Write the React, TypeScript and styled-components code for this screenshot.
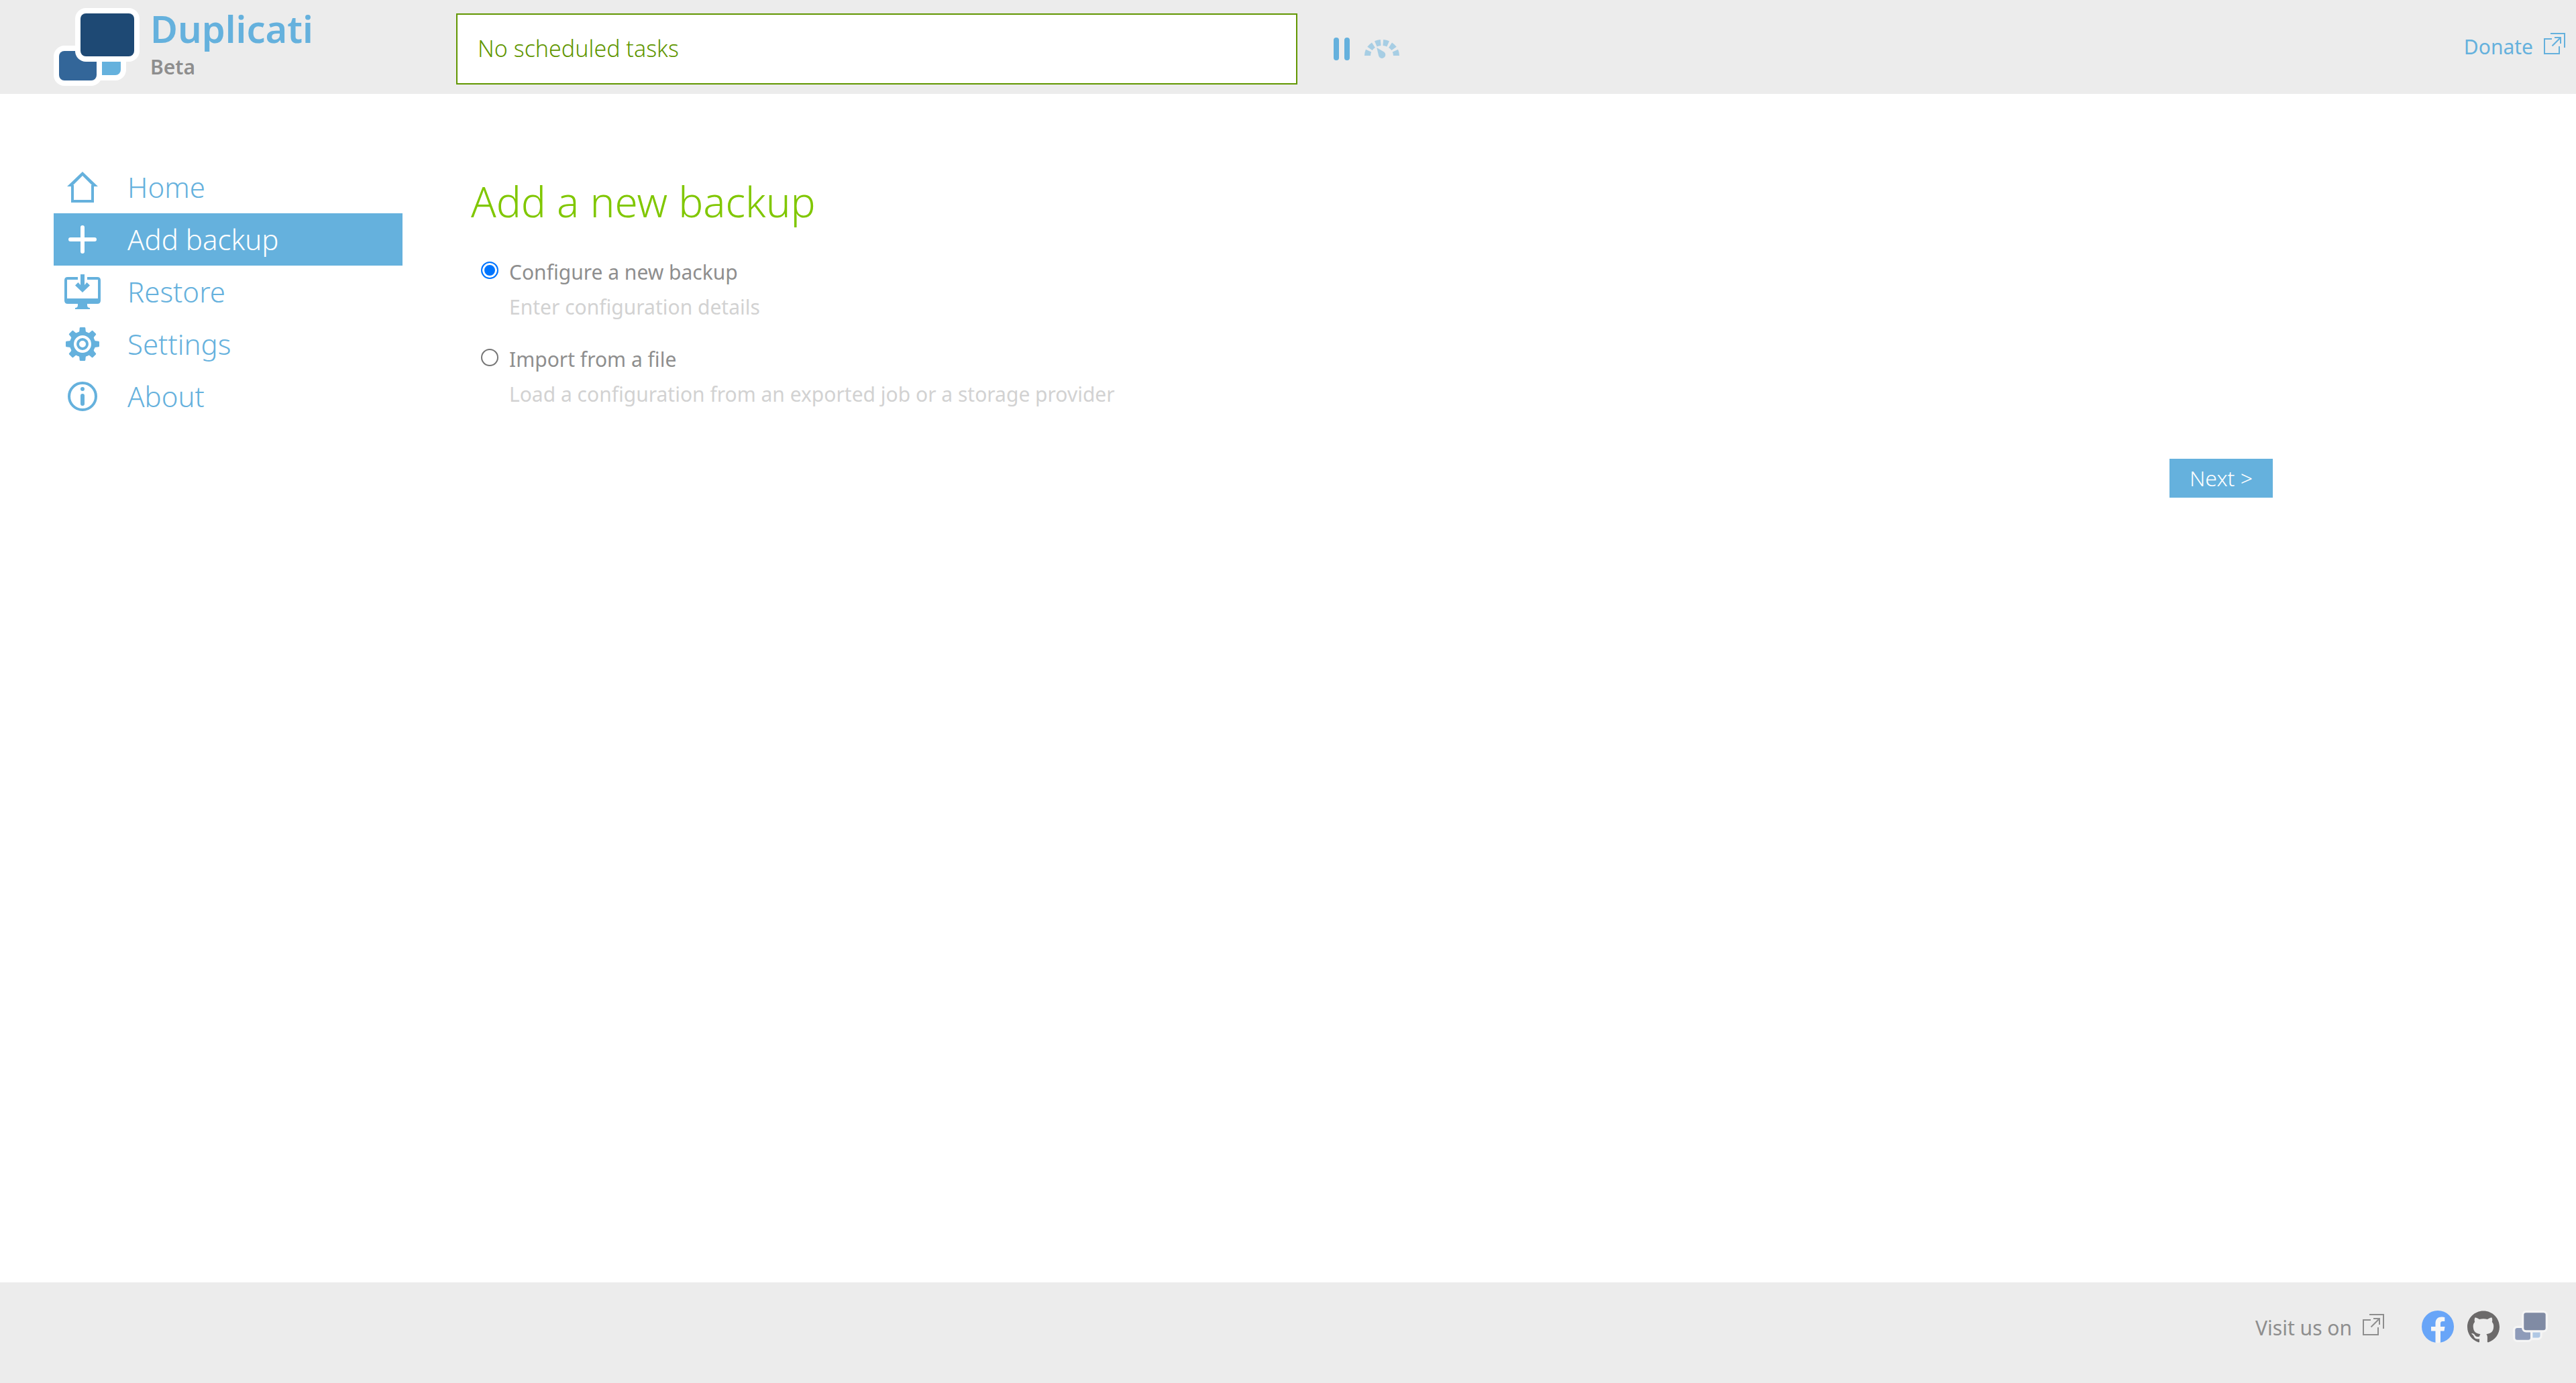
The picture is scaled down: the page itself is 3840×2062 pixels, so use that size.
import React, { useState } from "react";
import styled, { createGlobalStyle } from "styled-components";

const color = {
  blue: "#65b1dd",
  green: "#80c700",
  darkGreen: "#619600",
  bar: "#ececec",
  text: "#8e8e8e",
  hint: "#d2d2d2",
};

const GlobalStyle = createGlobalStyle`
  *, *::before, *::after { box-sizing: border-box; }
  body {
    margin: 0;
    background: #fff;
    color: ${color.text};
    font-family: "Noto Sans", "Open Sans", sans-serif;
    font-size: 30px;
    line-height: 52px;
  }
  a { color: inherit; text-decoration: none; }
  svg { display: block; flex: none; }
`;

const Page = styled.div`
  display: flex;
  flex-direction: column;
  min-height: 100vh;
`;

const Header = styled.header`
  display: flex;
  align-items: center;
  height: 140px;
  padding: 0 16px 0 80px;
  background: ${color.bar};
`;

const Brand = styled.a`
  display: flex;
  flex: none;
  gap: 16px;
  width: 600px;
`;

const BrandText = styled.span`
  display: flex;
  flex-direction: column;
  gap: 10px;
`;

const BrandName = styled.span`
  color: ${color.blue};
  font-size: 56px;
  font-weight: 600;
  line-height: 60px;
`;

const BrandChannel = styled.span`
  font-weight: 600;
  line-height: 36px;
`;

const Status = styled.div`
  display: flex;
  align-items: center;
  flex: 0 1 1254px;
  height: 106px;
  margin-top: 6px;
  padding: 0 30px 2px;
  border: 2px solid ${color.darkGreen};
  background: #fff;
  color: ${color.darkGreen};
  font-size: 34px;
  font-weight: 300;
`;

const Controls = styled.div`
  display: flex;
  align-items: center;
  gap: 22px;
  margin: 6px auto 0 54px;
`;

const IconButton = styled.button`
  display: block;
  padding: 0;
  border: 0;
  background: none;
  color: ${color.blue};
  cursor: pointer;
`;

const OutLink = styled.a<{ $tone: string }>`
  display: flex;
  align-items: center;
  gap: 16px;
  height: 52px;
  color: ${(p) => p.$tone};
  svg { margin-bottom: 10px; }
`;

const Main = styled.main`
  display: flex;
  flex: 1;
  padding: 100px 80px;
`;

const Menu = styled.nav`
  flex: none;
  width: 520px;
`;

const MenuList = styled.ul`
  margin: 0;
  padding: 0;
  list-style: none;
`;

const MenuLink = styled.a<{ $active?: boolean }>`
  display: grid;
  grid-template-columns: 86px 1fr;
  gap: 24px;
  align-items: center;
  height: 78px;
  background: ${(p) => (p.$active ? color.blue : "transparent")};
  && { color: ${(p) => (p.$active ? "#fff" : color.blue)}; }
  font-size: 42px;
  font-weight: 300;
  svg { justify-self: center; }
`;

const Content = styled.form`
  display: flex;
  flex-direction: column;
  flex: 0 1 2686px;
  margin-left: 102px;
  padding-top: 20px;
`;

const Title = styled.h1`
  margin: 0 0 40px;
  color: ${color.green};
  font-size: 62px;
  font-weight: 300;
  line-height: 80px;
`;

const Options = styled.div`
  display: flex;
  flex-direction: column;
  gap: 26px;
  padding-left: 15px;
`;

const Option = styled.div`
  display: grid;
  grid-template-columns: 26px 1fr;
  column-gap: 16px;
`;

const Radio = styled.input`
  appearance: none;
  width: 26px;
  height: 26px;
  margin: 10px 0 0;
  border: 2px solid #767676;
  border-radius: 50%;
  background: #fff;
  &:checked {
    border-color: #0075ff;
    background: #0075ff;
    box-shadow: inset 0 0 0 3px #fff;
  }
`;

const Hint = styled.span`
  grid-column: 2;
  color: ${color.hint};
`;

const NextButton = styled.button`
  align-self: flex-end;
  height: 58px;
  margin-top: 70px;
  padding: 0 30px;
  border: 0;
  background: ${color.blue};
  color: #fff;
  font: inherit;
  font-size: 32px;
  font-weight: 300;
  cursor: pointer;
`;

const Footer = styled.footer`
  display: flex;
  align-items: flex-start;
  justify-content: flex-end;
  gap: 56px;
  height: 150px;
  padding: 42px 42px 0;
  background: ${color.bar};
`;

const FooterLinks = styled.div`
  display: flex;
  gap: 20px;
`;

type LogoProps = { width: number; height: number; edge: string; front: string; back: string; accent: string };

const Logo = ({ width, height, edge, front, back, accent }: LogoProps) => (
  <svg width={width} height={height} viewBox="0 0 128 116" aria-hidden="true">
    <path d="M50 60H108V92A16 16 0 0 1 92 108H50Z" fill={edge} />
    <path d="M72 70H100V92A8 8 0 0 1 92 100H72Z" fill={accent} />
    <rect x="0" y="56" width="72" height="60" rx="16" fill={edge} />
    <rect x="8" y="64" width="56" height="44" rx="8" fill={back} />
    <rect x="32" y="0" width="96" height="80" rx="16" fill={edge} />
    <rect x="40" y="8" width="80" height="64" rx="8" fill={front} />
  </svg>
);

const PauseIcon = () => (
  <svg width="24" height="34" viewBox="0 0 24 34" fill="currentColor" aria-hidden="true">
    <rect width="8" height="34" rx="4" />
    <rect x="16" width="8" height="34" rx="4" />
  </svg>
);

const GaugeIcon = () => (
  <svg width="52" height="28" viewBox="0 0 52 28" opacity="0.5" aria-hidden="true">
    <path d="M4.500 24A21.500 19.500 0 0 1 47.500 24" fill="none" stroke="currentColor" strokeWidth="9" pathLength="680" strokeDasharray="80 40" />
    <path d="M18.300 12L29.200 18.600A5.200 5.200 0 1 1 21.300 24.800Z" fill="currentColor" />
  </svg>
);

const ExternalIcon = () => (
  <svg width="32" height="32" viewBox="0 0 32 32" fill="none" stroke="currentColor" strokeWidth="2" aria-hidden="true">
    <path d="M12 9H1V31H23V20" />
    <path d="M10 1H31V22" />
    <path d="M12.500 19.500L25 7" />
    <path d="M16 7H25V16" />
  </svg>
);

const HomeIcon = () => (
  <svg width="46" height="46" viewBox="0 0 46 46" fill="currentColor" fillRule="evenodd" aria-hidden="true">
    <path d="M23 0L46 22H40V46H6V22H0ZM23 6L9 20H10V42H36V20H37Z" />
  </svg>
);

const PlusIcon = () => (
  <svg width="42" height="42" viewBox="0 0 42 42" stroke="currentColor" strokeWidth="6" strokeLinecap="round" aria-hidden="true">
    <path d="M21 3V39M3 21H39" />
  </svg>
);

const RestoreIcon = () => (
  <svg width="54" height="52" viewBox="0 0 54 52" fill="currentColor" aria-hidden="true">
    <path d="M20 4H5Q0 4 0 9V39Q0 44 5 44H20V46Q20 50 16 50V52H38V50Q34 50 34 46V44H49Q54 44 54 39V9Q54 4 49 4H34V8H50V36H4V8H20Z" />
    <path d="M24 0H30V16L33.500 12L38 16.500L27 27L16 16.500L20.500 12L24 16Z" />
  </svg>
);

const GearIcon = () => (
  <svg width="50" height="50" viewBox="0 0 50 50" aria-hidden="true">
    <g fill="none" stroke="currentColor">
      <circle cx="25" cy="25" r="16" strokeWidth="6" />
      <circle cx="25" cy="25" r="7" strokeWidth="4" />
    </g>
    {[0, 45, 90, 135, 180, 225, 270, 315].map((angle) => (
      <path
        key={angle}
        d="M18 8.500Q20 7.500 20.300 5.500L20.700 1Q20.900 0 22 0H28Q29.100 0 29.300 1L29.700 5.500Q30 7.500 32 8.500L29 11.500H21Z"
        fill="currentColor"
        transform={`rotate(${angle} 25 25)`}
      />
    ))}
  </svg>
);

const InfoIcon = () => (
  <svg width="44" height="44" viewBox="0 0 44 44" fill="currentColor" aria-hidden="true">
    <circle cx="22" cy="22" r="20" fill="none" stroke="currentColor" strokeWidth="4" />
    <circle cx="22" cy="11" r="3" />
    <rect x="19" y="18" width="6" height="18" rx="3" />
  </svg>
);

const FacebookIcon = () => (
  <svg width="48" height="48" viewBox="0 0 48 48" aria-hidden="true">
    <circle cx="24" cy="24" r="24" fill="#68a5f8" />
    <path fill="#f6f6f6" d="M20.500 47.700V30.500H14V24H20.500V19C20.500 12.500 24.500 9.500 29.500 9.500C31.500 9.500 34.300 10 34.300 10V16H31C28.800 16 28 17.500 28 19.300V24H34.500L33.500 30.500H28V47.700Q24 48.300 20.500 47.700Z" />
  </svg>
);

const GithubIcon = () => (
  <svg width="48" height="48" viewBox="0 0 24 24" fill="#6c6a6a" aria-hidden="true">
    <path d="M12 .297c-6.63 0-12 5.373-12 12 0 5.303 3.438 9.8 8.205 11.385.6.113.82-.258.82-.577 0-.285-.01-1.04-.015-2.04-3.338.724-4.042-1.61-4.042-1.61C4.422 18.07 3.633 17.7 3.633 17.7c-1.087-.744.084-.729.084-.729 1.205.084 1.838 1.236 1.838 1.236 1.07 1.835 2.809 1.305 3.495.998.108-.776.417-1.305.76-1.605-2.665-.3-5.466-1.332-5.466-5.93 0-1.31.465-2.38 1.235-3.22-.135-.303-.54-1.523.105-3.176 0 0 1.005-.322 3.3 1.23.96-.267 1.98-.399 3-.405 1.02.006 2.04.138 3 .405 2.28-1.552 3.285-1.23 3.285-1.23.645 1.653.24 2.873.12 3.176.765.84 1.23 1.91 1.23 3.22 0 4.61-2.805 5.625-5.475 5.92.42.36.81 1.096.81 2.22 0 1.606-.015 2.896-.015 3.286 0 .315.21.69.825.57C20.565 22.092 24 17.592 24 12.297c0-6.627-5.373-12-12-12" />
  </svg>
);

const menu = [
  { label: "Home", icon: <HomeIcon /> },
  { label: "Add backup", icon: <PlusIcon />, active: true },
  { label: "Restore", icon: <RestoreIcon /> },
  { label: "Settings", icon: <GearIcon /> },
  { label: "About", icon: <InfoIcon /> },
];

const options = [
  { id: "new", label: "Configure a new backup", hint: "Enter configuration details" },
  { id: "import", label: "Import from a file", hint: "Load a configuration from an exported job or a storage provider" },
];

export default function App() {
  const [choice, setChoice] = useState("new");

  return (
    <Page>
      <GlobalStyle />
      <Header>
        <Brand href="#">
          <Logo width={128} height={116} edge="#fff" front="#1e4974" back="#336699" accent="#65b1dd" />
          <BrandText>
            <BrandName>Duplicati</BrandName>
            <BrandChannel>Beta</BrandChannel>
          </BrandText>
        </Brand>
        <Status role="status">No scheduled tasks</Status>
        <Controls>
          <IconButton type="button" aria-label="Pause"><PauseIcon /></IconButton>
          <IconButton type="button" aria-label="Throttle"><GaugeIcon /></IconButton>
        </Controls>
        <OutLink href="#" $tone={color.blue}>
          Donate
          <ExternalIcon />
        </OutLink>
      </Header>
      <Main>
        <Menu>
          <MenuList>
            {menu.map((item) => (
              <li key={item.label}>
                <MenuLink href="#" $active={item.active} aria-current={item.active ? "page" : undefined}>
                  {item.icon}
                  {item.label}
                </MenuLink>
              </li>
            ))}
          </MenuList>
        </Menu>
        <Content onSubmit={(event) => event.preventDefault()}>
          <Title>Add a new backup</Title>
          <Options role="radiogroup">
            {options.map((option) => (
              <Option key={option.id}>
                <Radio
                  type="radio"
                  name="source"
                  id={option.id}
                  aria-describedby={`${option.id}-hint`}
                  checked={choice === option.id}
                  onChange={() => setChoice(option.id)}
                />
                <label htmlFor={option.id}>{option.label}</label>
                <Hint id={`${option.id}-hint`}>{option.hint}</Hint>
              </Option>
            ))}
          </Options>
          <NextButton type="submit">Next &gt;</NextButton>
        </Content>
      </Main>
      <Footer>
        <OutLink as="div" $tone={color.text}>
          Visit us on
          <ExternalIcon />
        </OutLink>
        <FooterLinks>
          <a href="#" aria-label="Facebook"><FacebookIcon /></a>
          <a href="#" aria-label="GitHub"><GithubIcon /></a>
          <a href="#" aria-label="Duplicati website">
            <Logo width={52} height={47} edge="#f5f5f5" front="#808ba4" back="#8e9bb9" accent="#b0c8e4" />
          </a>
        </FooterLinks>
      </Footer>
    </Page>
  );
}
